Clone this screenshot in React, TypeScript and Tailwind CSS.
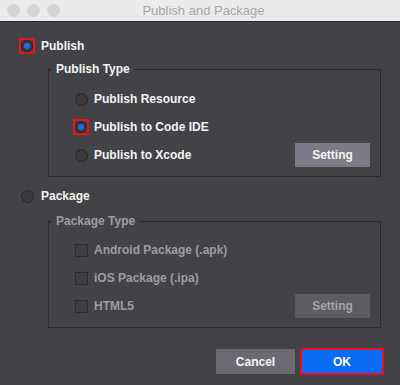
import React from "react";

const font = { fontFamily: '"Liberation Sans", Arial, sans-serif' };

function Radio({ checked = false, highlight = false }: { checked?: boolean; highlight?: boolean }) {
  return (
    <span
      className={
        "flex h-[16px] w-[16px] shrink-0 items-center justify-center " +
        (highlight ? "border-2 border-[#ec121c]" : "")
      }
    >
      <span
        className={
          "flex items-center justify-center rounded-full border border-[#27262a] bg-[#3a393e] " +
          (highlight ? "h-[12px] w-[12px]" : "h-[13px] w-[13px]")
        }
      >
        {checked && <span className="h-[6px] w-[6px] rounded-full bg-[#1a6fec]" />}
      </span>
    </span>
  );
}

function Check() {
  return (
    <span className="flex h-[16px] w-[16px] shrink-0 items-center justify-center">
      <span className="h-[13px] w-[13px] border border-[#2b2a2e] bg-[#3e3d42]" />
    </span>
  );
}

export default function App() {
  return (
    <div className="flex h-[385px] w-[400px] flex-col bg-[#434247] text-[12px]" style={font}>
      <div className="relative flex h-[22px] shrink-0 items-center border-b border-[#2a292d] bg-[#ebebeb]">
        <div className="flex gap-[7px] pl-[7px]">
          <span className="h-[13px] w-[13px] rounded-full bg-[#d4d4d4]" />
          <span className="h-[13px] w-[13px] rounded-full bg-[#d4d4d4]" />
          <span className="h-[13px] w-[13px] rounded-full bg-[#d4d4d4]" />
        </div>
        <div className="flex-1 pr-[53px] text-center text-[13px] text-[#a8a8a8]">Publish and Package</div>
      </div>

      <div className="flex flex-col pl-[19px] pr-[19px]">
        <div className="mt-[16px] flex h-[16px] items-center gap-[6px] font-bold text-[#f4f4f4]">
          <Radio checked highlight />
          <span>Publish</span>
        </div>

        <fieldset className="ml-[29px] mt-[6px] border border-[#2c2b30] pb-[7px] pt-[7px]">
          <legend className="ml-[3px] px-[4px] text-[12px] font-bold leading-[18px] text-[#f4f4f4]">Publish Type</legend>
          <div className="flex flex-col pl-[24px] pr-[10px] font-bold text-[#f4f4f4]">
            <div className="flex h-[28px] items-center gap-[5px]">
              <Radio />
              <span>Publish Resource</span>
            </div>
            <div className="flex h-[28px] items-center gap-[5px]">
              <Radio checked highlight />
              <span>Publish to Code IDE</span>
            </div>
            <div className="flex h-[28px] items-center gap-[5px]">
              <Radio />
              <span>Publish to Xcode</span>
              <button className="ml-auto flex h-[24px] w-[75px] items-center justify-center bg-[#7c7b85] font-bold text-[#f4f4f4]">
                Setting
              </button>
            </div>
          </div>
        </fieldset>

        <div className="mt-[11px] flex h-[16px] items-center gap-[6px] font-bold text-[#f4f4f4]">
          <Radio />
          <span>Package</span>
        </div>

        <fieldset className="ml-[29px] mt-[8px] border border-[#2c2b30] pb-[7px] pt-[6px]">
          <legend className="ml-[3px] px-[4px] text-[12px] font-bold leading-[18px] text-[#9c9ca6]">Package Type</legend>
          <div className="flex flex-col pl-[24px] pr-[10px] font-bold text-[#9c9ca6]">
            <div className="flex h-[28px] items-center gap-[5px]">
              <Check />
              <span>Android Package (.apk)</span>
            </div>
            <div className="flex h-[28px] items-center gap-[5px]">
              <Check />
              <span>iOS Package (.ipa)</span>
            </div>
            <div className="flex h-[28px] items-center gap-[5px]">
              <Check />
              <span>HTML5</span>
              <button className="ml-auto flex h-[24px] w-[75px] items-center justify-center bg-[#5d5c63] font-bold text-[#a3a3aa]">
                Setting
              </button>
            </div>
          </div>
        </fieldset>

        <div className="mt-[20px] flex items-center justify-end gap-[5px]">
          <button className="flex h-[25px] w-[79px] items-center justify-center bg-[#6b6a72] font-bold text-[#f4f4f4]">
            Cancel
          </button>
          <button className="-mr-[3px] flex h-[27px] w-[84px] items-center justify-center border-2 border-[#e8101c] bg-[#0a6cf2] font-bold text-white">
            OK
          </button>
        </div>
      </div>
    </div>
  );
}
